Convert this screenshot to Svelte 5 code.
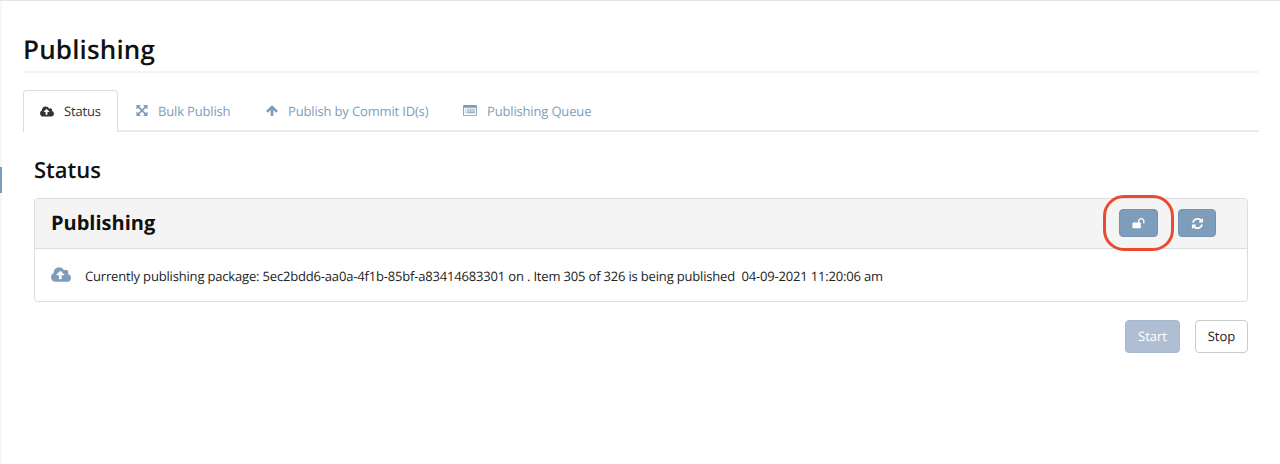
<script>
  const cloud = 'M1280 928q0-14-9-23l-352-352q-9-9-23-9t-23 9l-351 351q-10 12-10 24 0 14 9 23t23 9h224v352q0 13 9.500 22.500t22.500 9.500h192q13 0 22.500-9.500t9.500-22.500v-352h224q13 0 22.500-9.500t9.500-22.500zm640 288q0 159-112.500 271.500t-271.500 112.500h-1088q-185 0-316.500-131.500t-131.500-316.500q0-130 70-240t188-165q-2-30-2-43 0-212 150-362t362-150q156 0 285.500 87t188.500 231q71-62 166-62 106 0 181 75t75 181q0 76-41 138 130 31 213.500 135.500t83.500 238.500z';
  const expand = 'M1411 541l-355 355 355 355 144-144q29-31 70-14 39 17 39 59v448q0 26-19 45t-45 19h-448q-42 0-59-40-17-39 14-69l144-144-355-355-355 355 144 144q31 30 14 69-17 40-59 40h-448q-26 0-45-19t-19-45v-448q0-42 40-59 39-17 69 14l144 144 355-355-355-355-144 144q-19 19-45 19-12 0-24-5-40-17-40-59v-448q0-26 19-45t45-19h448q42 0 59 40 17 39-14 69l-144 144 355 355 355-355-144-144q-31-30-14-69 17-40 59-40h448q26 0 45 19t19 45v448q0 42-39 59-13 5-25 5-26 0-45-19z';
  const arrow = 'M1675 971q0 51-37 90l-75 75q-38 38-91 38-54 0-90-38l-294-293v704q0 52-37.500 84.500t-90.500 32.500h-128q-53 0-90.500-32.500t-37.500-84.500v-704l-294 293q-36 38-90 38t-90-38l-75-75q-38-38-38-90 0-53 38-91l651-651q35-37 90-37 54 0 91 37l651 651q37 39 37 91z';
  const list = 'M160 128h1600q160 0 160 160v1216q0 160-160 160h-1600q-160 0-160-160v-1216q0-160 160-160zM128 512v992q0 32 32 32h1600q32 0 32-32v-992zM256 640h128v128h-128zM512 640h1152v128h-1152zM256 896h128v128h-128zM512 896h1152v128h-1152zM256 1152h128v128h-128zM512 1152h1152v128h-1152z';
  const refresh = 'M1639 1056q0 5-1 7-64 268-268 434.500t-478 166.500q-146 0-282.500-55t-243.500-157l-129 129q-19 19-45 19t-45-19-19-45v-448q0-26 19-45t45-19h448q26 0 45 19t19 45-19 45l-137 137q71 66 161 102t187 36q134 0 250-65t186-179q11-17 53-117 8-23 30-23h192q13 0 22.500 9.500t9.500 22.500zm25-800v448q0 26-19 45t-45 19h-448q-26 0-45-19t-19-45 19-45l138-138q-148-137-349-137-134 0-250 65t-186 179q-11 17-53 117-8 23-30 23h-199q-13 0-22.500-9.500t-9.500-22.500v-7q65-268 270-434.500t480-166.500q146 0 284 55.500t245 156.500l130-129q19-19 45-19t45 19 19 45z';
  const unlock = 'M1728 576v256q0 26-19 45t-45 19h-64q-26 0-45-19t-19-45v-256q0-106-75-181t-181-75-181 75-75 181v192h96q40 0 68 28t28 68v576q0 40-28 68t-68 28h-960q-40 0-68-28t-28-68v-576q0-40 28-68t68-28h672v-192q0-185 131.500-316.500t316.500-131.500 316.500 131.500 131.500 316.500z';
  const tabs = [
    { label: 'Status', icon: cloud, box: '0 0 1920 1792', active: true, width: 95 },
    { label: 'Bulk Publish', icon: expand, box: '-64 0 1920 1792', width: 130 },
    { label: 'Publish by Commit ID(s)', icon: arrow, box: '-64 0 1920 1792', width: 198 },
    { label: 'Publishing Queue', icon: list, box: '0 0 1920 1792', width: 160 }
  ];
</script>

<main>
  <div class="rail"></div>
  <h1>Publishing</h1>
  <nav>
    {#each tabs as tab}
      <a class:active={tab.active} style="width: {tab.width}px">
        <svg viewBox={tab.box} fill-rule="evenodd"><path d={tab.icon} /></svg>
        <span>{tab.label}</span>
      </a>
    {/each}
  </nav>
  <section>
    <h2>Status</h2>
    <div class="panel">
      <header>
        <h3>Publishing</h3>
        <button class="icon unlock"><svg viewBox="0 0 1792 1792"><path d={unlock} /></svg><i class="ring"></i></button>
        <button class="icon"><svg viewBox="0 0 1792 1792"><path d={refresh} /></svg></button>
      </header>
      <div class="body">
        <svg viewBox="0 0 1920 1792"><path d={cloud} /></svg>
        <p>Currently publishing package: 5ec2bdd6-aa0a-4f1b-85bf-a83414683301 on . Item 305 of 326 is being published&nbsp; 04-09-2021 11:20:06 am</p>
      </div>
    </div>
    <div class="actions">
      <button class="start">Start</button>
      <button class="stop">Stop</button>
    </div>
  </section>
</main>

<style>
  :global(body) { margin: 0; background: #fff; }
  main {
    position: relative;
    box-sizing: border-box;
    height: 464px;
    padding: 0 21px 0 23px;
    border-top: 1px solid #e4e4e4;
    font-family: 'Open Sans', sans-serif;
    font-size: 13px;
    text-rendering: geometricPrecision;
    color: #222;
    overflow: hidden;
  }
  .rail {
    position: absolute;
    left: 0; top: 0; bottom: 0;
    width: 2px;
    background: linear-gradient(#f7f7f7 166px, #7e9dbb 166px 192px, #f7f7f7 192px);
  }
  h1, h2, h3, p { margin: 0; }
  h1 {
    box-sizing: border-box;
    height: 72px;
    padding-top: 30px;
    border-bottom: 2px solid #f4f4f4;
    font-size: 26px;
    line-height: 36px;
    font-weight: 600;
    letter-spacing: 0.15px;
    color: #111;
  }
  nav {
    display: flex;
    height: 40px;
    margin-top: 17px;
    border-bottom: 2px solid #e9e9e9;
  }
  a {
    box-sizing: border-box;
    display: flex;
    align-items: center;
    height: 42px;
    padding: 0 0 1px 17px;
    color: #7e9dbb;
    white-space: nowrap;
  }
  a span { letter-spacing: -0.16px; }
  a svg { width: 14px; height: 13px; margin-right: 9px; fill: currentColor; }
  a.active {
    padding-left: 16px;
    border: 1px solid #ddd;
    border-bottom: 0;
    border-radius: 4px 4px 0 0;
    background: #fff;
    color: #333;
  }
  a.active svg { margin-right: 10px; }
  a:last-child svg { margin-right: 10px; }
  section { padding: 0 11px; }
  h2 {
    box-sizing: border-box;
    height: 66px;
    padding-top: 23px;
    font-size: 22px;
    line-height: 30px;
    font-weight: 600;
    color: #111;
  }
  .panel {
    box-sizing: border-box;
    height: 104px;
    border: 1px solid #ddd;
    border-radius: 4px;
  }
  header {
    display: flex;
    align-items: center;
    box-sizing: border-box;
    height: 50px;
    padding: 0 31px 1px 16px;
    border-bottom: 1px solid #ddd;
    border-radius: 3px 3px 0 0;
    background: #f4f4f4;
  }
  h3 { flex: 1; font-size: 20px; line-height: 28px; font-weight: 700; color: #111; }
  button {
    box-sizing: border-box;
    display: flex;
    align-items: center;
    justify-content: center;
    padding: 0;
    border: 1px solid #7593b1;
    border-radius: 4px;
    font: inherit;
    text-rendering: inherit;
  }
  .icon { width: 38px; height: 28px; background: #7e9dbb; color: #fff; }
  .icon svg { width: 13px; height: 13px; fill: currentColor; }
  .unlock { position: relative; width: 39px; margin-right: 20px; }
  .ring {
    position: absolute;
    left: -17px; top: -15px;
    box-sizing: border-box;
    width: 71px;
    height: 56px;
    border: 3px solid #ec4a30;
    border-radius: 21px;
  }
  .body { display: flex; align-items: center; height: 52px; padding-left: 16px; }
  .body svg { width: 20px; height: 19px; margin: -2px 14px 0 0; fill: #7e9dbb; }
  .body p { padding-top: 2px; line-height: 19px; letter-spacing: -0.175px; white-space: nowrap; }
  .actions { display: flex; justify-content: flex-end; gap: 15px; margin-top: 18px; }
  .actions button { height: 33px; padding-bottom: 1px; }
  .start { width: 55px; border-color: #a5b8cc; background: #afbed2; color: #fff; }
  .stop { width: 53px; border-color: #ccc; background: #fff; color: #222; }
</style>
